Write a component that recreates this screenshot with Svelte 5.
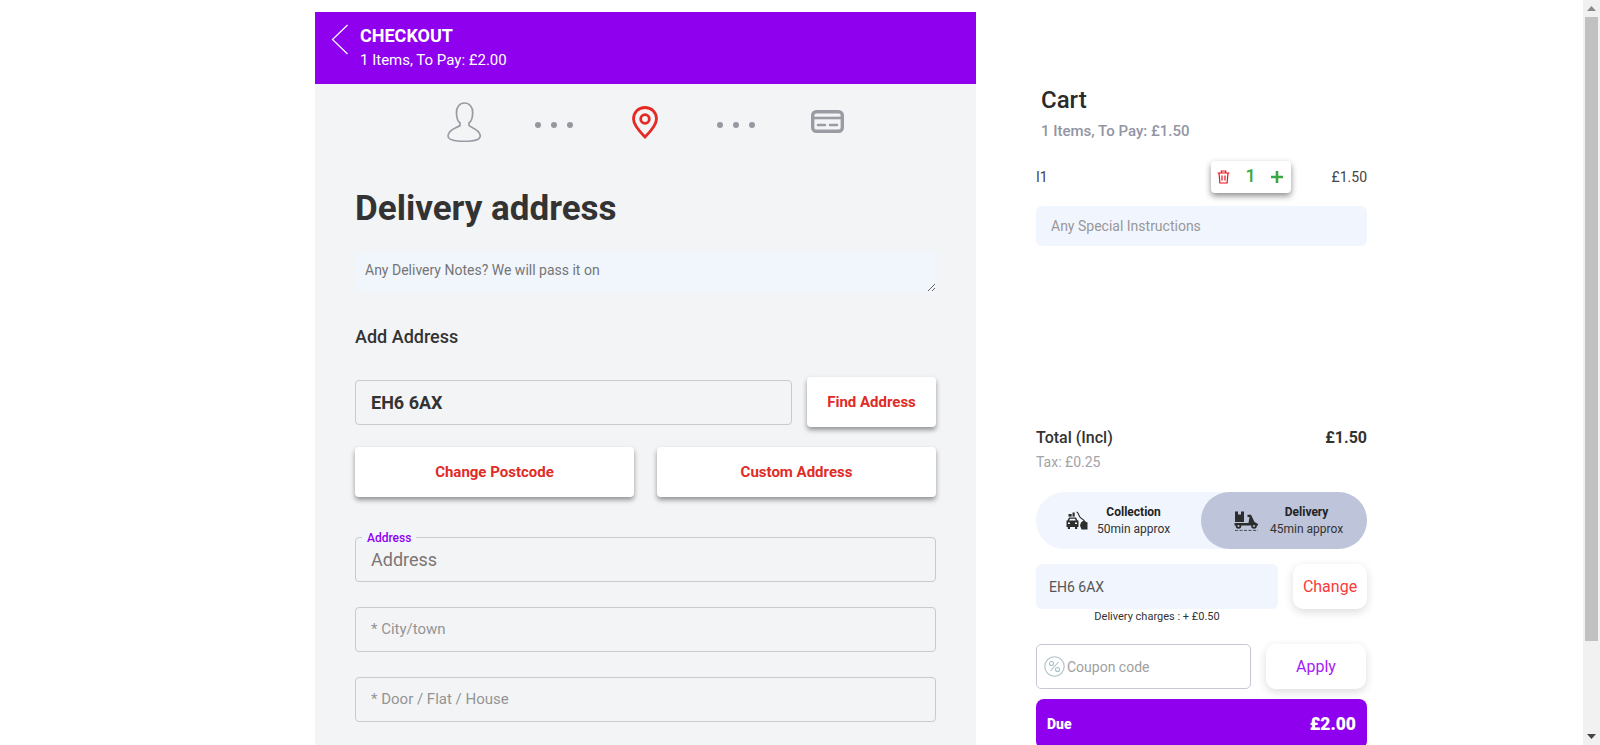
<script>
	const fields = ["* City/town", "* Door / Flat / House"];
</script>

<div class="page">
	<div class="content">
		<main class="checkout">
			<header class="top">
				<svg class="back" width="18" height="31" viewBox="0 0 18 31">
					<path d="M16.5 1 L1.5 15.5 L16.5 30" fill="none" stroke="#fff" stroke-width="1.2" />
				</svg>
				<div>
					<h2>CHECKOUT</h2>
					<p>1 Items, To Pay: £2.00</p>
				</div>
			</header>

			<div class="steps">
				<svg width="34" height="40" viewBox="0 0 34 40" fill="none" stroke="#9a9ca4" stroke-width="1.7">
					<path d="M17.5 1 C12.5 1 9.5 5 9.5 10.5 C9.5 15.5 11 19.5 13 21 L13 23.5 C10 26 1 27.5 1 34 C1 37.5 7 39.3 17 39.3 C27 39.3 33.2 37.5 33.2 34 C33.2 27.5 24.5 26 22 23.5 L22 21 C24 19.5 25.7 15.5 25.7 10.5 C25.7 5 22.5 1 17.5 1 Z" />
				</svg>
				<div class="dots first"><i></i><i></i><i></i></div>
				<svg width="26" height="33" viewBox="0 0 26 33" fill="none" stroke="#e52a24" stroke-width="2.8">
					<path d="M13 1.5 C6.5 1.5 1.5 6.5 1.5 13 C1.5 19.5 8.5 26.5 13 31 C17.5 26.5 24.5 19.5 24.5 13 C24.5 6.5 19.5 1.5 13 1.5 Z" />
					<circle cx="13" cy="13" r="4.3" />
				</svg>
				<div class="dots second"><i></i><i></i><i></i></div>
				<svg class="card" width="33" height="23" viewBox="0 0 33 23" fill="none" stroke="#9a9ca4" stroke-width="3.4">
					<rect x="1.7" y="1.7" width="29.6" height="19.6" rx="3.5" />
					<path d="M2 8 H31" stroke-width="2.6" />
					<path d="M7 15 H14 M19 15 H26" stroke-width="2.6" stroke-linecap="round" />
				</svg>
			</div>

			<section class="form">
				<h1>Delivery address</h1>
				<textarea class="notes" placeholder="Any Delivery Notes? We will pass it on"></textarea>
				<h3>Add Address</h3>

				<div class="find-row">
					<input class="field postcode" value="EH6 6AX" />
					<button class="raised find">Find Address</button>
				</div>

				<div class="button-row">
					<button class="raised">Change Postcode</button>
					<button class="raised">Custom Address</button>
				</div>

				<div class="address">
					<span class="legend">Address</span>
					<input class="field big" placeholder="Address" />
				</div>

				{#each fields as field}
					<input class="field small" placeholder={field} />
				{/each}
			</section>
		</main>

		<aside class="cart">
			<h2>Cart</h2>
			<p class="summary">1 Items, To Pay: £1.50</p>

			<div class="line">
				<span class="name">I1</span>
				<div class="qty">
					<svg width="13" height="14" viewBox="0 0 13 14" fill="none" stroke="#e8131b" stroke-width="1.2">
						<path d="M0.5 3 H12.5 M4.3 3 V1 H8.7 V3 M2 3 L2.9 13 H10.1 L11 3 M5 5.5 V10.5 M8 5.5 V10.5" />
					</svg>
					<b>1</b>
					<svg width="12" height="12" viewBox="0 0 12 12" stroke="#3aa745" stroke-width="2.6">
						<path d="M0 6 H12 M6 0 V12" />
					</svg>
				</div>
				<span class="price">£1.50</span>
			</div>

			<input class="special" placeholder="Any Special Instructions" />

			<div class="total">
				<span>Total (Incl)</span>
				<span class="amount">£1.50</span>
			</div>
			<p class="tax">Tax: £0.25</p>

			<div class="toggle">
				<div class="option">
					<svg width="22" height="19" viewBox="0 0 22 19" fill="#2d2d2d">
						<path d="M1.5 9.5 L3 6.5 H10 L11.5 9.5 H12.5 V16 H11.2 V18 H9 V16 H4 V18 H1.8 V16 H0.5 V9.5 Z M3.2 9.5 H9.8 L9 7.8 H4 Z M2 11.5 V13 H4 V11.5 Z M9 11.5 V13 H11 V11.5 Z" fill-rule="evenodd" />
						<rect x="2.5" y="3" width="3.2" height="2.6" />
						<rect x="6.5" y="1.5" width="2.2" height="4.1" />
						<path d="M10.5 0.5 C13 1 13 4 14.5 6 L19 9.5 L18.3 10.3 L13.7 6.8 C12 4.6 12 2 10.5 1.6 Z" />
						<path d="M15 11.5 L17.5 9.5 L21.5 11.5 V18.5 H15.5 L14 14.5 Z" />
					</svg>
					<div class="label">
						<strong>Collection</strong>
						<span>50min approx</span>
					</div>
				</div>
				<div class="option active">
					<svg width="25" height="20" viewBox="0 0 25 20" fill="#2d2d2d">
						<path d="M1 0.5 H10 V11 H1 Z M4 0.5 V3.5 H7 V0.5 Z" fill-rule="evenodd" />
						<path d="M0.5 12 H14.5 L15.5 6 H13.5 V3.8 H17 L20.5 11 L24 13 V14.6 H0.5 Z" />
						<circle cx="4.5" cy="15" r="2.8" />
						<circle cx="4.5" cy="15" r="1" fill="#bec4da" />
						<circle cx="20" cy="15" r="2.8" />
						<circle cx="20" cy="15" r="1" fill="#bec4da" />
						<path d="M1 19.4 H24" stroke="#2d2d2d" stroke-width="0.8" stroke-dasharray="3 1.5" />
					</svg>
					<div class="label">
						<strong>Delivery</strong>
						<span>45min approx</span>
					</div>
				</div>
			</div>

			<div class="where">
				<div class="where-left">
					<input class="where-code" value="EH6 6AX" />
					<p>Delivery charges : + £0.50</p>
				</div>
				<button class="soft change">Change</button>
			</div>

			<div class="coupon-row">
				<div class="coupon">
					<svg width="21" height="21" viewBox="0 0 21 21" fill="none" stroke="#a9c1c9" stroke-width="1.1">
						<circle cx="10.5" cy="10.5" r="9.7" />
						<path d="M14.5 6 L6.5 15" />
						<circle cx="7.5" cy="7.5" r="2" />
						<circle cx="13.5" cy="13.5" r="2" />
					</svg>
					<input placeholder="Coupon code" />
				</div>
				<button class="soft apply">Apply</button>
			</div>

			<div class="due">
				<span>Due</span>
				<span class="due-amount">£2.00</span>
			</div>
		</aside>
	</div>

	<div class="scrollbar">
		<svg width="17" height="17" viewBox="0 0 17 17"><path d="M8.5 6 L13 11 H4 Z" fill="#8a8a8a" /></svg>
		<div class="track"><div class="thumb"></div></div>
		<svg width="17" height="17" viewBox="0 0 17 17"><path d="M4 6 H13 L8.5 11 Z" fill="#444" /></svg>
	</div>
</div>

<style>
	:global(body) {
		margin: 0;
		background: #fff;
		overflow: hidden;
		font-family: Roboto, "Liberation Sans", sans-serif;
	}

	* {
		box-sizing: border-box;
	}

	button,
	input,
	textarea {
		font-family: inherit;
	}

	.page {
		display: flex;
		height: 745px;
		overflow: hidden;
	}

	.content {
		flex: 1;
		display: flex;
		align-items: flex-start;
		padding: 12px 0 0 315px;
		gap: 60px;
	}

	/* left column */
	.checkout {
		width: 661px;
		height: 733px;
		background: #f3f4f6;
		overflow: hidden;
	}

	.top {
		display: flex;
		height: 72px;
		background: #8f00ef;
		color: #fff;
		padding: 12px 0 0 16px;
		gap: 11px;
	}

	.top h2 {
		margin: 1px 0 0;
		font-size: 18px;
		line-height: 22px;
		font-weight: 700;
	}

	.top p {
		margin: 4px 0 0;
		font-size: 15px;
		line-height: 18px;
		font-weight: 400;
	}

	.steps {
		display: flex;
		align-items: center;
		height: 76px;
		padding-left: 132px;
	}

	.card {
		margin-top: -1px;
	}

	.dots {
		display: flex;
		gap: 10px;
		margin-top: 6px;
	}

	.dots.first {
		margin-left: 54px;
		margin-right: 59px;
	}

	.dots.second {
		margin-left: 59px;
		margin-right: 56px;
	}

	.dots i {
		width: 6px;
		height: 6px;
		border-radius: 50%;
		background: #96989f;
	}

	.form {
		padding: 0 40px 0 40px;
		display: flex;
		flex-direction: column;
	}

	h1 {
		margin: 29px 0 0;
		font-size: 35px;
		line-height: 40px;
		font-weight: 700;
		color: #333;
	}

	.notes {
		display: block;
		width: 581px;
		height: 40px;
		margin: 23px 0 0;
		padding: 9px 10px;
		font-size: 14px;
		line-height: 18px;
		border: none;
		background: #f1f6fd;
	}

	.notes::placeholder {
		color: #757575;
	}

	h3 {
		margin: 33px 0 0;
		font-size: 18px;
		line-height: 24px;
		font-weight: 500;
		color: #333;
	}

	.find-row {
		display: flex;
		align-items: center;
		gap: 15px;
		margin-top: 28px;
	}

	.field {
		height: 45px;
		width: 100%;
		padding: 0 15px;
		border: 1px solid #c8cad0;
		border-radius: 4px;
		background: transparent;
		outline: none;
	}

	.postcode {
		flex: 1;
		font-size: 18px;
		font-weight: 700;
		color: #333;
	}

	.raised {
		height: 50px;
		border: none;
		border-radius: 4px;
		background: #fff;
		color: #e02c26;
		font-size: 15px;
		font-weight: 700;
		box-shadow: 0 3px 5px rgba(0, 0, 0, 0.4);
	}

	.find {
		width: 129px;
		flex: none;
	}

	.button-row {
		display: grid;
		grid-template-columns: 279px 279px;
		gap: 23px;
		margin-top: 20px;
	}

	.address {
		position: relative;
		margin-top: 40px;
	}

	.legend {
		position: absolute;
		left: 7px;
		top: -6px;
		padding: 0 5px;
		font-size: 12px;
		line-height: 14px;
		font-weight: 500;
		color: #8f00ef;
		background: #f1f6fd;
	}

	.big {
		font-size: 18px;
	}

	.big::placeholder {
		color: #7d7573;
	}

	.small {
		margin-top: 25px;
		padding-bottom: 2px;
		font-size: 15px;
	}

	.small::placeholder {
		color: #949494;
	}

	/* cart column */
	.cart {
		width: 331px;
		padding-top: 74px;
		color: #333;
	}

	.cart h2 {
		margin: 0 0 0 5px;
		font-size: 24px;
		line-height: 28px;
		font-weight: 500;
		color: #2b2b2b;
	}

	.summary {
		margin: 8px 0 0 5px;
		font-size: 15px;
		line-height: 18px;
		font-weight: 500;
		color: #9295a4;
	}

	.line {
		display: flex;
		align-items: center;
		height: 32px;
		margin-top: 21px;
		font-size: 14px;
		color: #444;
	}

	.name {
		width: 175px;
	}

	.qty {
		display: flex;
		align-items: center;
		justify-content: space-between;
		width: 80px;
		height: 32px;
		padding: 0 8px 0 6px;
		border-radius: 4px;
		background: #fff;
		box-shadow: 0 3px 6px rgba(0, 0, 0, 0.45);
	}

	.qty b {
		font-size: 18px;
		font-weight: 500;
		color: #3aa745;
		margin-top: -3px;
	}

	.price {
		margin-left: auto;
	}

	.special {
		display: block;
		width: 100%;
		height: 40px;
		margin-top: 13px;
		padding: 0 15px;
		border: none;
		border-radius: 6px;
		background: #f1f5fd;
		font-size: 14px;
	}

	.special::placeholder {
		color: #989898;
	}

	.total {
		display: flex;
		justify-content: space-between;
		margin-top: 182px;
		font-size: 16px;
		line-height: 20px;
		font-weight: 500;
	}

	.amount {
		font-weight: 700;
	}

	.tax {
		margin: 5px 0 0;
		font-size: 14px;
		line-height: 18px;
		color: #a3a3a8;
	}

	.toggle {
		display: grid;
		grid-template-columns: 165px 166px;
		height: 57px;
		margin-top: 21px;
		border-radius: 29px;
		background: #f1f5fd;
	}

	.option {
		display: flex;
		align-items: center;
		padding-left: 30px;
		gap: 9px;
		border-radius: 29px;
	}

	.option.active {
		background: #bec4da;
		padding-left: 33px;
		gap: 11px;
	}

	.label {
		display: flex;
		flex-direction: column;
		align-items: center;
		font-size: 12px;
		line-height: 17px;
		color: #333;
	}

	.label strong {
		font-weight: 700;
		color: #222;
	}

	.where {
		display: flex;
		align-items: flex-start;
		justify-content: space-between;
		margin-top: 15px;
	}

	.where-left {
		width: 242px;
	}

	.where-code {
		display: block;
		width: 100%;
		height: 45px;
		padding: 0 13px;
		border: none;
		border-radius: 6px;
		background: #f1f5fd;
		font-size: 14px;
		color: #555;
	}

	.where-left p {
		margin: 1px 0 0;
		text-align: center;
		font-size: 11px;
		line-height: 14px;
		color: #333;
	}

	.soft {
		height: 45px;
		border: none;
		border-radius: 10px;
		background: #fff;
		font-size: 16px;
		box-shadow: 0 3px 10px rgba(0, 0, 0, 0.14);
	}

	.change {
		width: 74px;
		color: #fc3a3a;
	}

	.coupon-row {
		display: flex;
		justify-content: space-between;
		margin-top: 20px;
		padding-right: 1px;
	}

	.coupon {
		display: flex;
		align-items: center;
		width: 215px;
		height: 45px;
		padding-left: 7px;
		gap: 2px;
		border: 1px solid #c6c9d3;
		border-radius: 5px;
	}

	.coupon input {
		flex: 1;
		min-width: 0;
		border: none;
		outline: none;
		padding: 0;
		background: transparent;
		font-size: 14px;
	}

	.coupon input::placeholder {
		color: #a0a0a0;
	}

	.apply {
		width: 100px;
		color: #a31cf5;
	}

	.due {
		display: flex;
		align-items: center;
		justify-content: space-between;
		height: 50px;
		margin-top: 10px;
		padding: 0 11px 0 11px;
		border-radius: 8px;
		background: #8f00ef;
		color: #fff;
		font-size: 14px;
		font-weight: 900;
	}

	.due-amount {
		font-size: 17.5px;
	}

	/* scrollbar */
	.scrollbar {
		width: 17px;
		flex: none;
		display: flex;
		flex-direction: column;
		background: #f1f1f1;
	}

	.track {
		flex: 1;
	}

	.thumb {
		width: 13px;
		height: 624px;
		margin-left: 2px;
		background: #c1c1c1;
	}
</style>
